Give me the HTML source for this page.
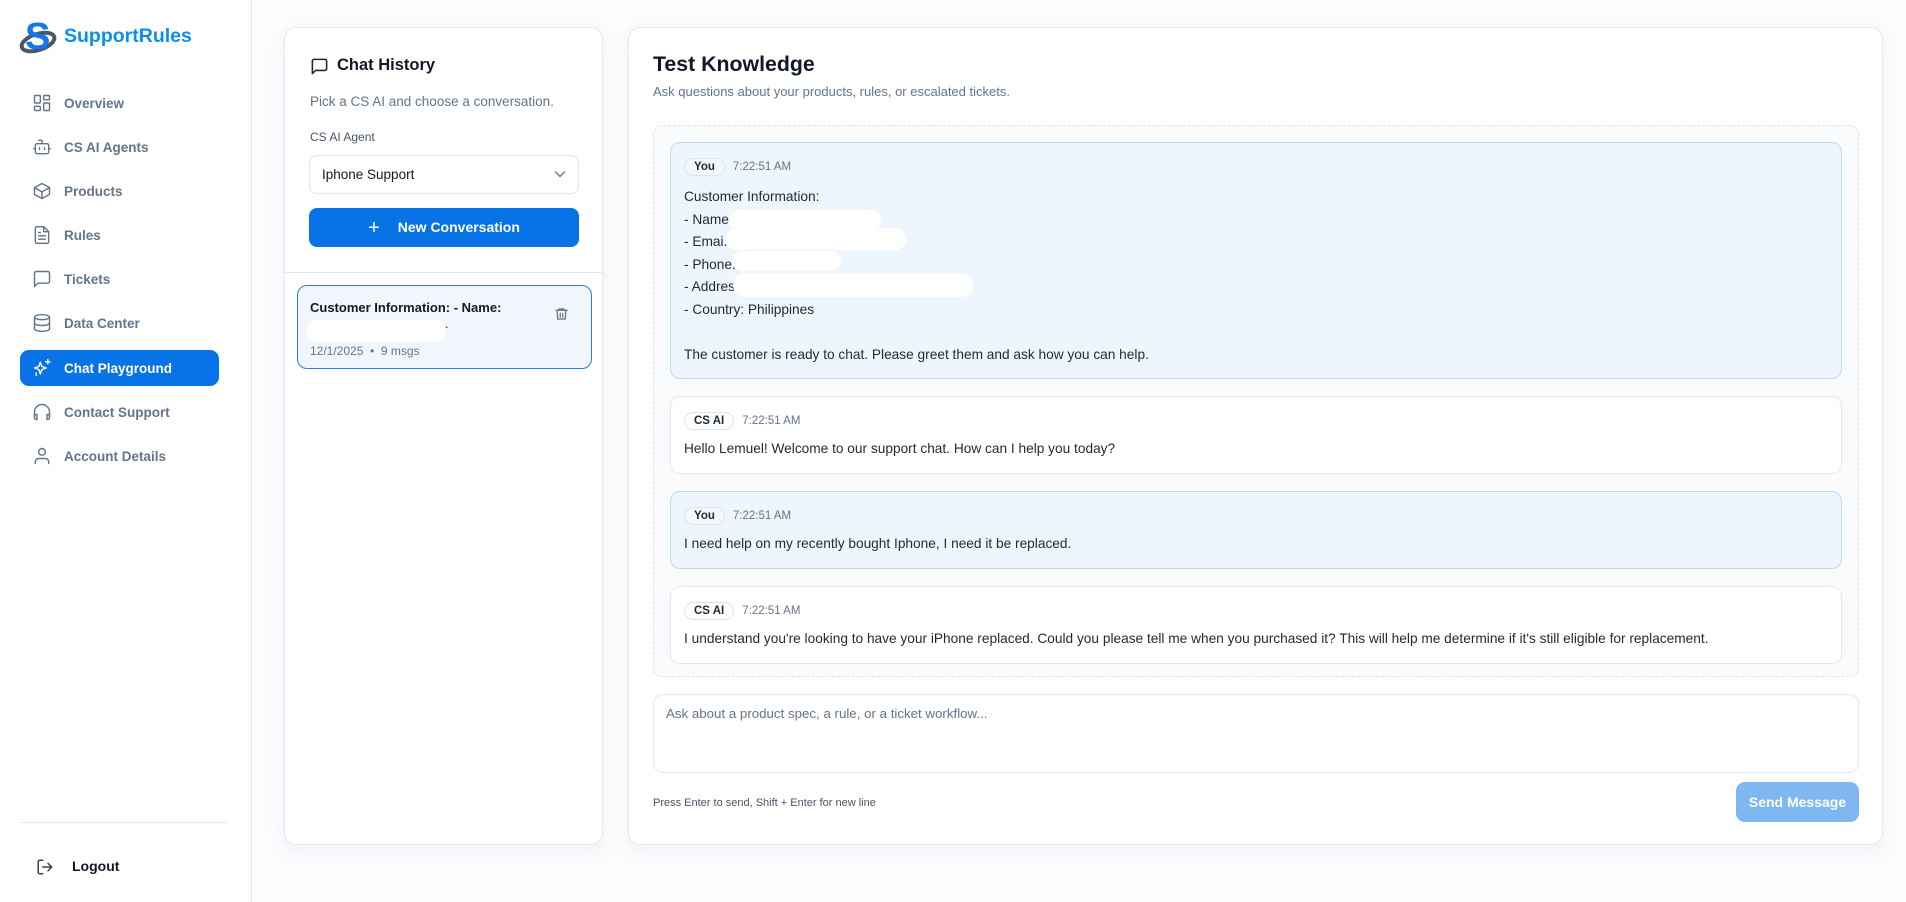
<!DOCTYPE html>
<html><head><meta charset="utf-8"><style>
*{box-sizing:border-box;margin:0;padding:0}
body{width:1906px;height:902px;overflow:hidden;background:#fbfcfd;font-family:"Liberation Sans",sans-serif;color:#1f2937;position:relative}
.abs{position:absolute}
.side{left:0;top:0;width:252px;height:902px;background:#fff;border-right:1px solid #e5e7eb}
.nav{position:absolute;left:20px;width:199px;height:36px;border-radius:9px;display:flex;align-items:center;padding-left:12px;font-size:13.5px;font-weight:bold;color:#64748b}
.nav svg{width:20px;height:20px;margin-right:12px;fill:none;stroke:#64748b;stroke-width:1.7;stroke-linecap:round;stroke-linejoin:round}
.nav.act{background:#0873e6;color:#fff}
.nav.act svg{stroke:#fff}
.panel{background:#fff;border:1px solid #e2e8f0;border-radius:12px;box-shadow:0 6px 20px rgba(30,80,160,.06)}
.msg{position:absolute;left:670px;width:1172px;border-radius:10px;padding:0 13px;font-size:13.7px;color:#1f2937}
.you{background:#eff5fc;border:1px solid #bcd8f3}
.ai{background:#fff;border:1px solid #e2e8f0}
.hd{display:flex;align-items:center;margin-top:13px;height:22px}
.tag{border:1px solid #dbe3ec;border-radius:11px;padding:2px 9px;font-size:11.5px;font-weight:bold;color:#1f2937;background:#fff}
.you .tag{background:#f4f8fc}
.tm{font-size:11.5px;color:#64748b;margin-left:8px}
.blob{position:absolute;background:#fff;border-radius:14px}
</style></head><body>
<div class="abs side">
  <svg class="abs" style="left:18px;top:16px" width="42" height="40" viewBox="0 0 42 40">
    <ellipse cx="20" cy="26" rx="17" ry="8" fill="none" stroke="#4b5563" stroke-width="4" transform="rotate(-18 20 26)"/>
    <text x="7" y="33" font-family="Liberation Sans" font-weight="bold" font-size="38" fill="#1478e8">S</text>
  </svg>
  <div class="abs" style="left:64px;top:25px;font-size:19.5px;font-weight:bold;color:#0b8ef0">SupportRules</div>
  <div class="nav" style="top:85px"><svg viewBox="0 0 24 24"><rect x="3" y="3" width="7" height="9" rx="1"/><rect x="14" y="3" width="7" height="5" rx="1"/><rect x="14" y="12" width="7" height="9" rx="1"/><rect x="3" y="16" width="7" height="5" rx="1"/></svg>Overview</div>
  <div class="nav" style="top:129px"><svg viewBox="0 0 24 24"><path d="M12 8V4H8"/><rect x="4" y="8" width="16" height="12" rx="2"/><path d="M2 14h2M20 14h2M15 13v2M9 13v2"/></svg>CS AI Agents</div>
  <div class="nav" style="top:173px"><svg viewBox="0 0 24 24"><path d="M21 8l-9-5-9 5v8l9 5 9-5z"/><path d="M3 8l9 5 9-5M12 13v8"/></svg>Products</div>
  <div class="nav" style="top:217px"><svg viewBox="0 0 24 24"><path d="M14 2H6a2 2 0 0 0-2 2v16a2 2 0 0 0 2 2h12a2 2 0 0 0 2-2V8z"/><path d="M14 2v6h6M8 13h8M8 17h8M8 9h2"/></svg>Rules</div>
  <div class="nav" style="top:261px"><svg viewBox="0 0 24 24"><path d="M21 15a2 2 0 0 1-2 2H7l-4 4V5a2 2 0 0 1 2-2h14a2 2 0 0 1 2 2z"/></svg>Tickets</div>
  <div class="nav" style="top:305px"><svg viewBox="0 0 24 24"><ellipse cx="12" cy="5" rx="9" ry="3"/><path d="M3 5v14c0 1.7 4 3 9 3s9-1.3 9-3V5M3 12c0 1.7 4 3 9 3s9-1.3 9-3"/></svg>Data Center</div>
  <div class="nav act" style="top:350px"><svg viewBox="0 0 24 24"><path d="M10 5l1.8 5.2L17 12l-5.2 1.8L10 19l-1.8-5.2L3 12l5.2-1.8z"/><path d="M19 2v5M16.5 4.5h5M5 18v3"/></svg>Chat Playground</div>
  <div class="nav" style="top:394px"><svg viewBox="0 0 24 24"><path d="M3 18v-6a9 9 0 0 1 18 0v6"/><path d="M21 19a2 2 0 0 1-2 2h-1v-6h3zM3 19a2 2 0 0 0 2 2h1v-6H3z"/></svg>Contact Support</div>
  <div class="nav" style="top:438px"><svg viewBox="0 0 24 24"><circle cx="12" cy="7" r="4"/><path d="M4 21v-2a4 4 0 0 1 4-4h8a4 4 0 0 1 4 4v2"/></svg>Account Details</div>
  <div class="abs" style="left:20px;top:822px;width:207px;height:1px;background:#e2e8f0"></div>
  <svg class="abs" style="left:36px;top:858px" width="18" height="18" viewBox="0 0 24 24" fill="none" stroke="#374151" stroke-width="2" stroke-linecap="round" stroke-linejoin="round"><path d="M9 21H5a2 2 0 0 1-2-2V5a2 2 0 0 1 2-2h4M16 17l5-5-5-5M21 12H9"/></svg>
  <div class="abs" style="left:72px;top:858px;font-size:14px;font-weight:bold;color:#111827">Logout</div>
</div>

<div class="abs panel" style="left:284px;top:27px;width:319px;height:818px">
  <svg class="abs" style="left:25px;top:29px" width="19" height="19" viewBox="0 0 24 24" fill="none" stroke="#1f2937" stroke-width="2" stroke-linejoin="round"><path d="M21 15a2 2 0 0 1-2 2H7l-4 4V5a2 2 0 0 1 2-2h14a2 2 0 0 1 2 2z"/></svg>
  <div class="abs" style="left:52px;top:28px;font-size:16.5px;font-weight:bold;color:#111827">Chat History</div>
  <div class="abs" style="left:25px;top:66px;font-size:13.5px;color:#64748b">Pick a CS AI and choose a conversation.</div>
  <div class="abs" style="left:25px;top:102px;font-size:12px;color:#475569">CS AI Agent</div>
  <div class="abs" style="left:24px;top:127px;width:270px;height:39px;border:1px solid #e2e8f0;border-radius:8px;font-size:13.5px;color:#111827;padding:11px 12px">Iphone Support
    <svg class="abs" style="right:12px;top:14px" width="12" height="8" viewBox="0 0 12 8" fill="none" stroke="#64748b" stroke-width="1.3"><path d="M1 1.5l5 5 5-5"/></svg></div>
  <div class="abs" style="left:24px;top:180px;width:270px;height:39px;background:#0873e6;border-radius:8px;color:#fff;font-size:14px;font-weight:bold;text-align:center;line-height:39px"><span style="font-weight:normal;font-size:20px;margin-right:18px;vertical-align:-2px">+</span>New Conversation</div>
  <div class="abs" style="left:0;top:244px;width:317px;height:1px;background:#e2e8f0"></div>
  <div class="abs" style="left:12px;top:257px;width:295px;height:84px;border:1.5px solid #2b7de6;border-radius:10px;background:#f1f6fc">
    <div class="abs" style="left:12px;top:14px;font-size:13px;font-weight:bold;color:#111827">Customer Information: - Name:</div>
    <div class="abs" style="left:147px;top:30px;font-size:13px">.</div>
    <div class="blob" style="left:8px;top:34px;width:140px;height:22px"></div>
    <div class="abs" style="left:12px;top:58px;font-size:12px;color:#64748b">12/1/2025 &nbsp;•&nbsp; 9 msgs</div>
    <svg class="abs" style="left:256px;top:20px" width="15" height="16" viewBox="0 0 24 24" fill="none" stroke="#64748b" stroke-width="2" stroke-linecap="round"><path d="M3 6h18M8 6V4h8v2M19 6l-1 14H6L5 6M10 11v6M14 11v6"/></svg>
  </div>
</div>

<div class="abs panel" style="left:628px;top:27px;width:1255px;height:818px"></div>
<div class="abs" style="left:653px;top:52px;font-size:21.3px;font-weight:bold;color:#111827">Test Knowledge</div>
<div class="abs" style="left:653px;top:84px;font-size:13px;color:#64748b">Ask questions about your products, rules, or escalated tickets.</div>
<div class="abs" style="left:653px;top:125px;width:1206px;height:552px;border:1px dashed #dde3ea;border-radius:10px;background:#fafbfd"></div>

<div class="msg you" style="top:142px;height:237px">
  <div class="hd"><span class="tag">You</span><span class="tm">7:22:51 AM</span></div>
  <div style="margin-top:8px;line-height:22.5px">Customer Information:<br>- Name<br>- Emai.<br>- Phone.<br>- Address.<br>- Country: Philippines<br><br>The customer is ready to chat. Please greet them and ask how you can help.</div>
  <div class="blob" style="left:58px;top:67px;width:152px;height:20px"></div>
  <div class="blob" style="left:55px;top:85px;width:180px;height:22px"></div>
  <div class="blob" style="left:62px;top:108px;width:108px;height:20px"></div>
  <div class="blob" style="left:62px;top:130px;width:240px;height:24px"></div>
</div>
<div class="msg ai" style="top:396px;height:78px">
  <div class="hd"><span class="tag">CS AI</span><span class="tm">7:22:51 AM</span></div>
  <div style="margin-top:9px">Hello Lemuel! Welcome to our support chat. How can I help you today?</div>
</div>
<div class="msg you" style="top:491px;height:78px">
  <div class="hd"><span class="tag">You</span><span class="tm">7:22:51 AM</span></div>
  <div style="margin-top:9px">I need help on my recently bought Iphone, I need it be replaced.</div>
</div>
<div class="msg ai" style="top:586px;height:78px">
  <div class="hd"><span class="tag">CS AI</span><span class="tm">7:22:51 AM</span></div>
  <div style="margin-top:9px">I understand you're looking to have your iPhone replaced. Could you please tell me when you purchased it? This will help me determine if it's still eligible for replacement.</div>
</div>

<div class="abs" style="left:653px;top:694px;width:1206px;height:79px;border:1px solid #e2e8f0;border-radius:10px;background:#fff;padding:11px 12px;font-size:13.3px;color:#64748b">Ask about a product spec, a rule, or a ticket workflow...</div>
<div class="abs" style="left:653px;top:797px;font-size:11px;color:#475569">Press Enter to send, Shift + Enter for new line</div>
<div class="abs" style="left:1736px;top:782px;width:123px;height:40px;border-radius:9px;background:#7fb8f0;color:#fff;font-size:14px;font-weight:bold;text-align:center;line-height:40px">Send Message</div>
</body></html>
